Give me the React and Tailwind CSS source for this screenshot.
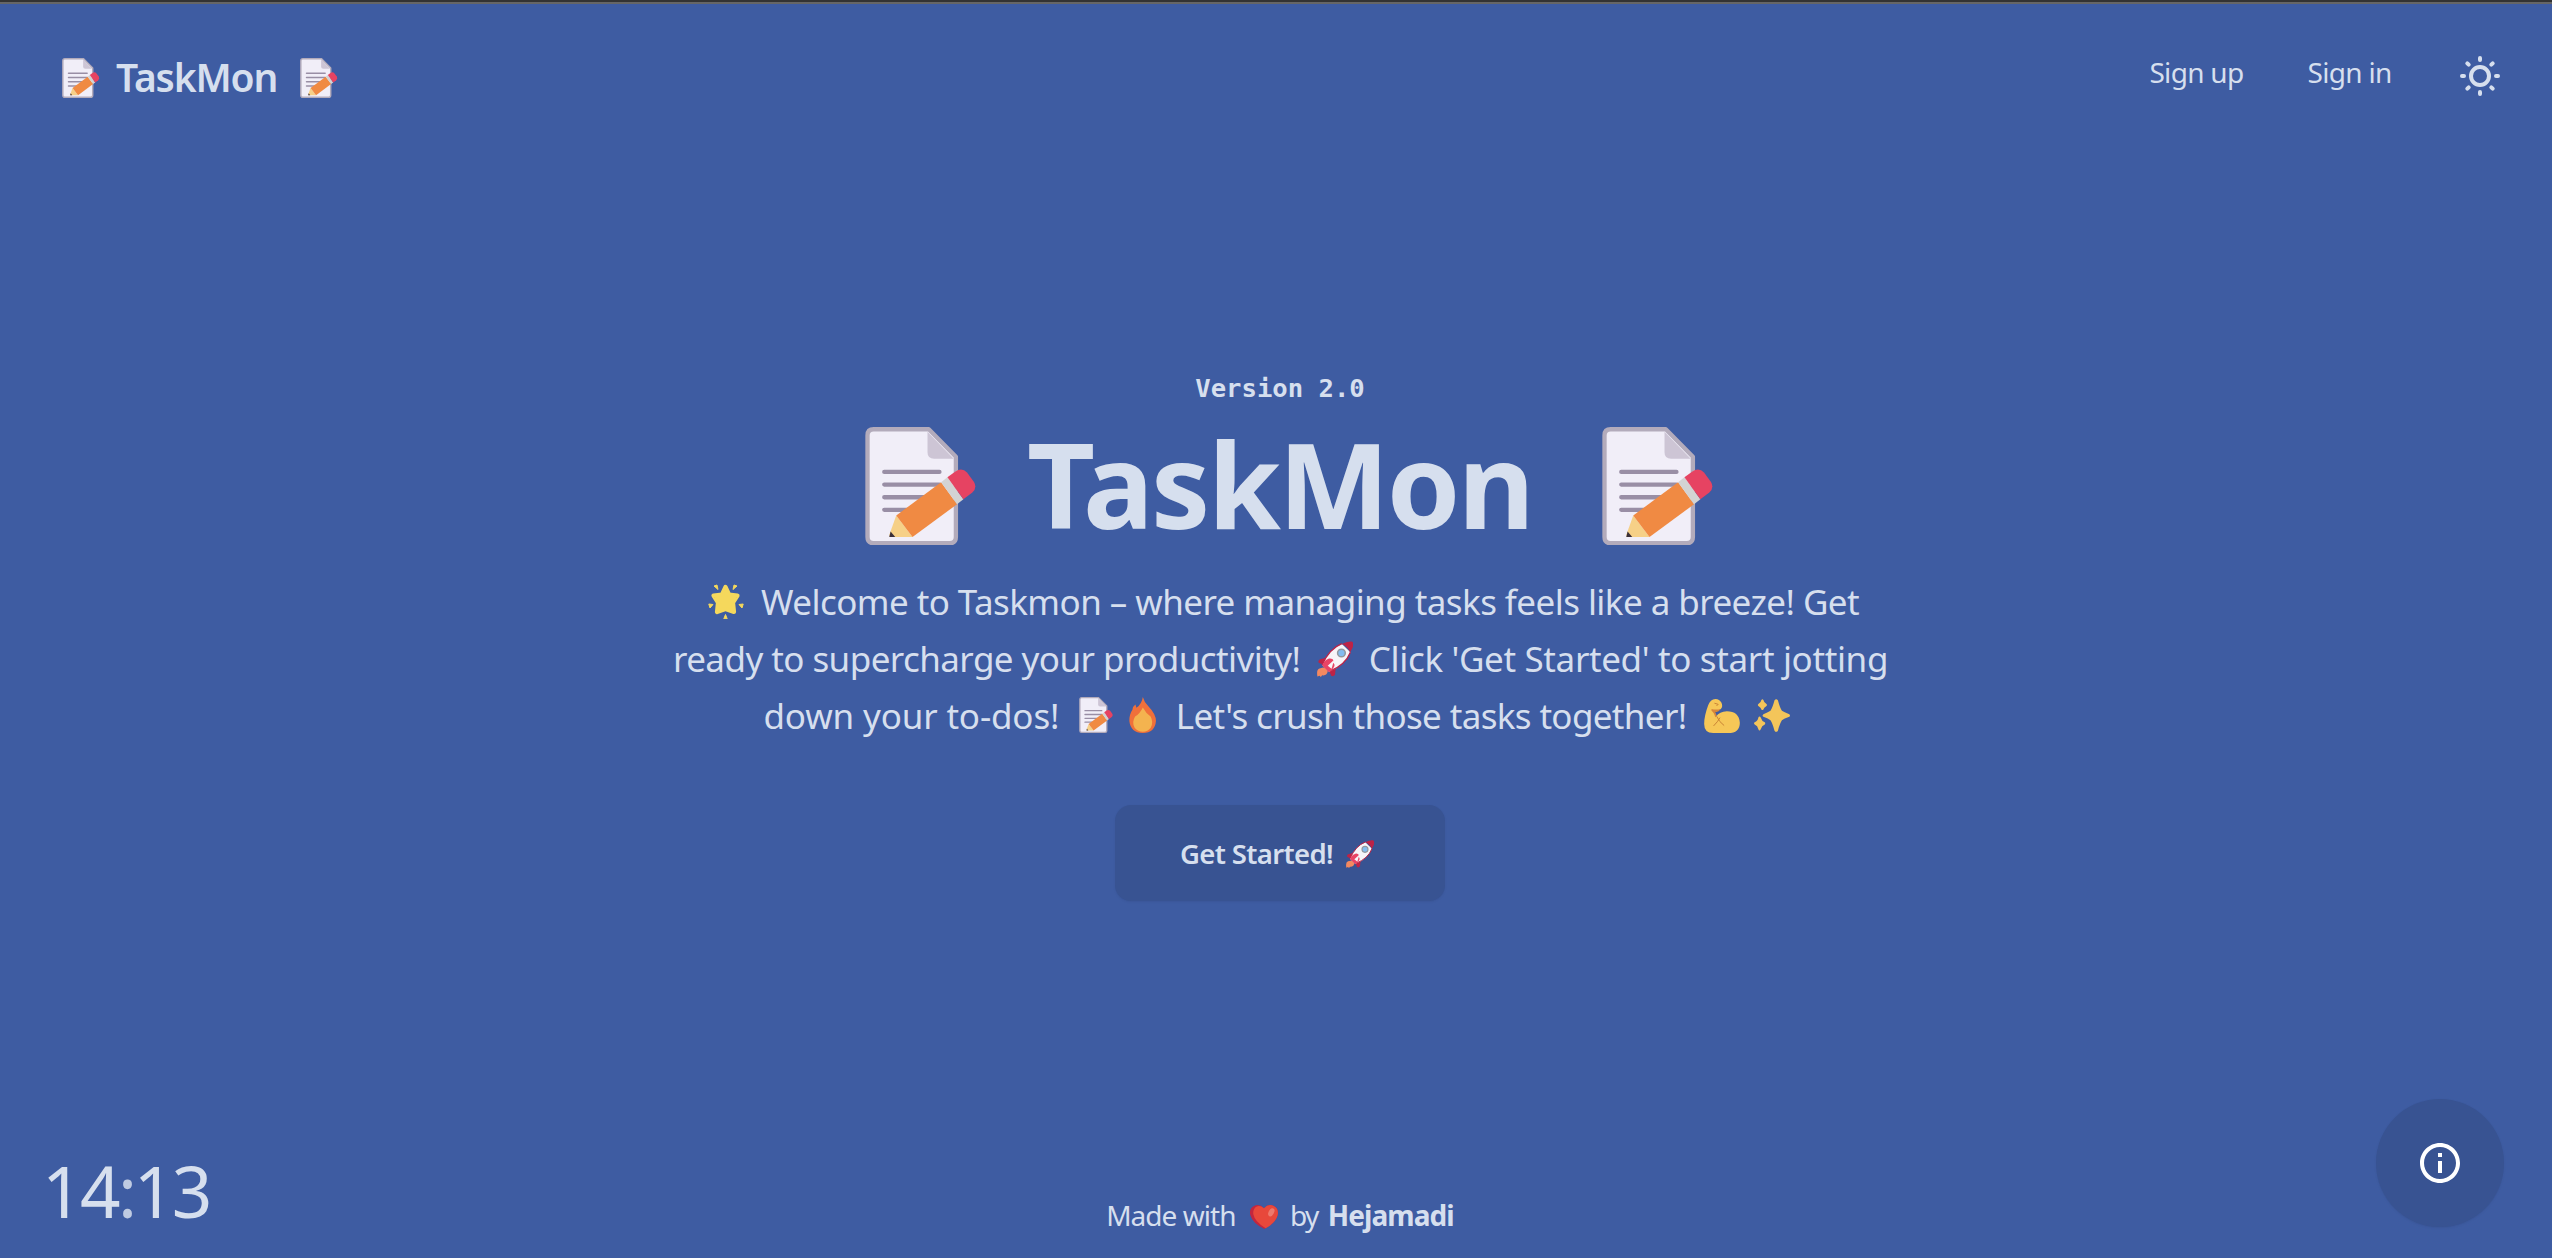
import React from "react";

function Memo({ className }) {
  return (
    <svg viewBox="75 201 334 356" className={`shrink-0 ${className}`} aria-hidden="true">
      <path d="M101 207.500H267L348.500 290V532Q348.500 550.500 330 550.500H101Q82.500 550.500 82.500 532V226Q82.500 207.500 101 207.500Z" fill="#f1eef8" stroke="#b3abbb" strokeWidth="13" strokeLinejoin="round" />
      <path d="M263 215L342 296H283Q263 296 263 276Z" fill="#cdc5d5" />
      <path d="M133 336H299M133 374H299M133 412H290M133 450H230" stroke="#998ea5" strokeWidth="13" strokeLinecap="round" fill="none" />
      <path d="M169 467L218 532H150L148 526Z" fill="#f6d087" />
      <path d="M152 515L166 532H148Z" fill="#3b2f38" />
      <path d="M169 467L304 367L352 433L218 532Z" fill="#f08a43" />
      <path d="M304 367L323 352L371 418L352 433Z" fill="#d3d3d3" />
      <path d="M323 352L346 335Q367 321 382 338L403 366Q413 384 398 398L371 418Z" fill="#e64362" />
    </svg>
  );
}

function Star({ className }) {
  return (
    <svg viewBox="0 0 36 35.500" className={`shrink-0 ${className}`} fill="#f5d85c" stroke="#f5d85c" strokeLinejoin="round" aria-hidden="true">
      <path d="M17.500 3L21 10.500L29.500 11.500L25 18.500L26 28L17.500 25L9 28L10 18.500L5.500 11.500L14 10.500Z" strokeWidth="4.200" />
      <path d="M6 2L9 1L10 5.500ZM26 1L29 2L25 5.500ZM.8 20L5 20.500L2 24ZM35.200 20L31 20.500L34 24ZM17.500 30.500L19.200 34.800H15.800Z" strokeWidth="1" />
    </svg>
  );
}

function Rocket({ className }) {
  return (
    <svg viewBox="0 0 84 84" className={`shrink-0 ${className}`} aria-hidden="true">
      <path d="M14 62Q24 62 25 72Q22 82 12 80L9 84L6 81L1 83Q-2 66 6 64Z" fill="#f38960" />
      <path d="M24 38L6 43Q1 47 4 51L17 56ZM44 60L42 79Q38 84 33 81L27 66Z" fill="#bc2347" />
      <path d="M12 56Q28 18 58 7L78 26Q64 58 28 72Z" fill="#f7f5f8" />
      <path d="M12 56Q28 18 58 6M78 26Q66 56 30 70" stroke="#bc2347" strokeWidth="3" fill="none" />
      <path d="M58 7Q70 0 81 1Q87 4 83 16L77 27Q73 13 58 7Z" fill="#bc2347" />
      <path d="M12 57Q18 44 28 41Q37 40 39 46L36 50Q43 53 40 60Q37 67 28 73Z" fill="#e94465" />
      <path d="M25 58L40 44L34 65Z" fill="#f7f5f8" />
      <circle cx="57" cy="28" r="9" fill="#83bdf0" stroke="#92999f" strokeWidth="3.500" />
    </svg>
  );
}

function Fire({ className }) {
  return (
    <svg viewBox="206 22 80 107" className={`shrink-0 ${className}`} aria-hidden="true">
      <path d="M247 22Q250 36 264 50Q286 73 286 93Q283 128 247 129Q211 128 207 94Q206 75 216 60Q218 48 225 44L228 54Q244 43 247 22Z" fill="#f0703a" />
      <path d="M247 53Q256 70 270 80Q280 98 270 114Q262 125 247 125Q232 125 223 114Q213 98 224 80Q238 72 247 53Z" fill="#f4b34f" />
    </svg>
  );
}

function Arm({ className }) {
  return (
    <svg viewBox="28 27 107 102" className={`shrink-0 ${className}`} aria-hidden="true">
      <path d="M40 46Q46 28 62 27Q74 28 80 38Q85 50 78 57Q70 64 58 62L64 79Q74 65 96 64Q132 64 135 98Q135 129 100 129H55Q28 129 28 102Q28 78 40 46Z" fill="#f6c757" />
      <path d="M50 57Q64 60 77 57Q72 68 61 65L66 78L61 82Q59 68 50 62Z" fill="#d6863c" />
      <path d="M60 40L70 43L66 47M66 80Q73 96 87 106M75 84Q69 95 57 107" stroke="#c98436" strokeWidth="3" strokeLinecap="round" fill="none" />
    </svg>
  );
}

function Sparkles({ className }) {
  return (
    <svg viewBox="177 28 107 98" className={`shrink-0 ${className}`} fill="#f4c55a" aria-hidden="true">
      <path d="M238 32Q243 25 248 32Q254 54 260 63Q266 67 282 73Q286 77 282 81Q266 86 260 91Q254 100 248 122Q243 129 238 122Q232 100 226 91Q220 86 205 81Q200 77 205 73Q220 67 226 63Q232 54 238 32Z" />
      <path d="M199 31Q202 27 205 31Q206 38 214 43Q217 46 214 49Q206 54 205 59Q202 63 199 59Q198 54 190 49Q187 46 190 43Q198 38 199 31Z" />
      <path d="M190 83Q193 77 197 83Q200 94 209 97Q212 100 209 104Q200 108 197 118Q193 125 190 118Q188 108 179 104Q175 100 179 97Q188 94 190 83Z" />
    </svg>
  );
}

function Heart({ className }) {
  return (
    <svg viewBox="0 0 84 72" className={`shrink-0 ${className}`} aria-hidden="true">
      <path d="M42 10Q28-5 12 3Q-4 12 1 31Q8 55 43 72Q76 55 83 31Q87 10 70 2Q54-4 42 10Z" fill="#c3263e" />
      <path d="M42 10Q30-1 19 5Q8 12 10 28Q14 50 47 70Q77 53 83 31Q87 10 70 2Q54-4 42 10Z" fill="#e8483b" />
      <ellipse cx="64" cy="22" rx="8" ry="13" transform="rotate(28 64 22)" fill="#ed7a6d" />
    </svg>
  );
}

function Sun({ className }) {
  return (
    <svg viewBox="0 0 40 40" className={`shrink-0 ${className}`} fill="none" stroke="currentColor" strokeWidth="4" strokeLinecap="round" aria-hidden="true">
      <circle cx="20" cy="20" r="9" />
      <path d="M20 2V4M20 36V38M2 20H4M36 20H38M7.300 7.300L8.700 8.700M31.300 31.300L32.700 32.700M7.300 32.700L8.700 31.300M31.300 8.700L32.700 7.300" />
    </svg>
  );
}

function Info({ className }) {
  return (
    <svg viewBox="2 2 20 20" className={className} fill="currentColor" aria-hidden="true">
      <path d="M11 7h2v2h-2zm0 4h2v6h-2zm1-9C6.480 2 2 6.480 2 12s4.480 10 10 10 10-4.480 10-10S17.520 2 12 2zm0 18c-4.410 0-8-3.590-8-8s3.590-8 8-8 8 3.590 8 8-3.590 8-8 8z" />
    </svg>
  );
}

export default function App() {
  return (
    <div className="flex h-[1258px] w-full flex-col overflow-hidden whitespace-nowrap border-t-2 border-[#333333] bg-[#3e5ca2] font-['Noto_Sans','Open_Sans',sans-serif] text-[#d6dfee]">
      <div className="h-[2px] shrink-0 bg-[#666666]" />
      <header className="flex h-[148px] shrink-0 items-center justify-between pl-[62px] pr-[52px]">
        <div className="flex items-center">
          <Memo className="h-10 w-[37.500px]" />
          <span className="mb-[2px] ml-[16.500px] text-[39px] font-semibold leading-[60px] tracking-[-1.157px]">TaskMon</span>
          <Memo className="ml-[23.200px] h-10 w-[37.500px]" />
        </div>
        <nav className="flex items-center text-[28px] leading-10">
          <a className="mb-[12px] tracking-[-0.701px]">Sign up</a>
          <a className="mb-[12px] ml-16 tracking-[-0.687px]">Sign in</a>
          <Sun className="mb-1 ml-[68.400px] size-10" />
        </nav>
      </header>

      <main className="flex h-[947px] shrink-0 flex-col items-center pl-2 pt-[216px]">
        <p className="font-['DejaVu_Sans_Mono',monospace] text-[25.600px] font-bold leading-10">Version 2.0</p>
        <h1 className="mt-2 flex h-[140px] items-center pl-[17.500px]">
          <Memo className="h-[118.500px] w-[111px]" />
          <span className="mb-[4px] ml-[51px] text-[118px] font-bold leading-[140px] tracking-[-2.625px]">TaskMon</span>
          <Memo className="ml-[69.500px] h-[118.500px] w-[111px]" />
        </h1>
        <div className="mt-[17px] flex w-[1212px] flex-col text-[35px] leading-[57px]">
          <p className="flex items-center pl-[34px]">
            <Star className="h-[35.500px] w-9" />
            <span className="ml-[17px] tracking-[-0.564px]">Welcome to Taskmon – where managing tasks feels like a breeze! Get</span>
          </p>
          <p className="-ml-px flex items-center">
            <span className="tracking-[-0.567px]">ready to supercharge your productivity!</span>
            <Rocket className="ml-[17px] mt-px size-9" />
            <span className="ml-[15.500px] tracking-[-0.362px]">Click 'Get Started' to start jotting</span>
          </p>
          <p className="flex items-center pl-[89.500px]">
            <span className="tracking-[-0.156px]">down your to-dos!</span>
            <Memo className="mb-px ml-5 h-9 w-[34px]" />
            <Fire className="mb-px ml-[15.500px] h-9 w-[27px]" />
            <span className="ml-5 tracking-[-0.646px]">Let's crush those tasks together!</span>
            <Arm className="ml-[17px] mt-px h-[34px] w-9" />
            <Sparkles className="ml-[14px] h-[33px] w-9" />
          </p>
        </div>
        <button className="mt-[61px] flex h-24 w-[330px] shrink-0 items-center rounded-2xl bg-[#385392] pl-[65px] shadow-sm shadow-black/5">
          <span className="mt-px text-[27.500px] font-semibold leading-10 tracking-[-0.650px]">Get Started!</span>
          <Rocket className="ml-[13px] mt-[2px] size-7" />
        </button>
      </main>

      <footer className="grid h-[159px] shrink-0 grid-cols-[1fr_auto_1fr] items-start">
        <div className="mt-[51.500px] pl-[42px] text-[71px] leading-[80px] tracking-[-2.600px]">
          14<span className="tracking-[-3.400px] opacity-85">:</span>13
        </div>
        <p className="mt-[95.600px] flex items-center pl-2 text-[28px] leading-10">
          <span className="tracking-[-0.967px]">Made with</span>
          <Heart className="ml-[14.500px] mt-1 h-6 w-7" />
          <span className="ml-3 tracking-[-1.660px]">by</span>
          <strong className="ml-[10px] font-bold tracking-[-0.903px]">Hejamadi</strong>
        </p>
        <button className="mr-12 flex size-32 items-center justify-center justify-self-end rounded-full bg-[#385392] text-white shadow-sm shadow-black/5">
          <Info className="size-10" />
        </button>
      </footer>
    </div>
  );
}
